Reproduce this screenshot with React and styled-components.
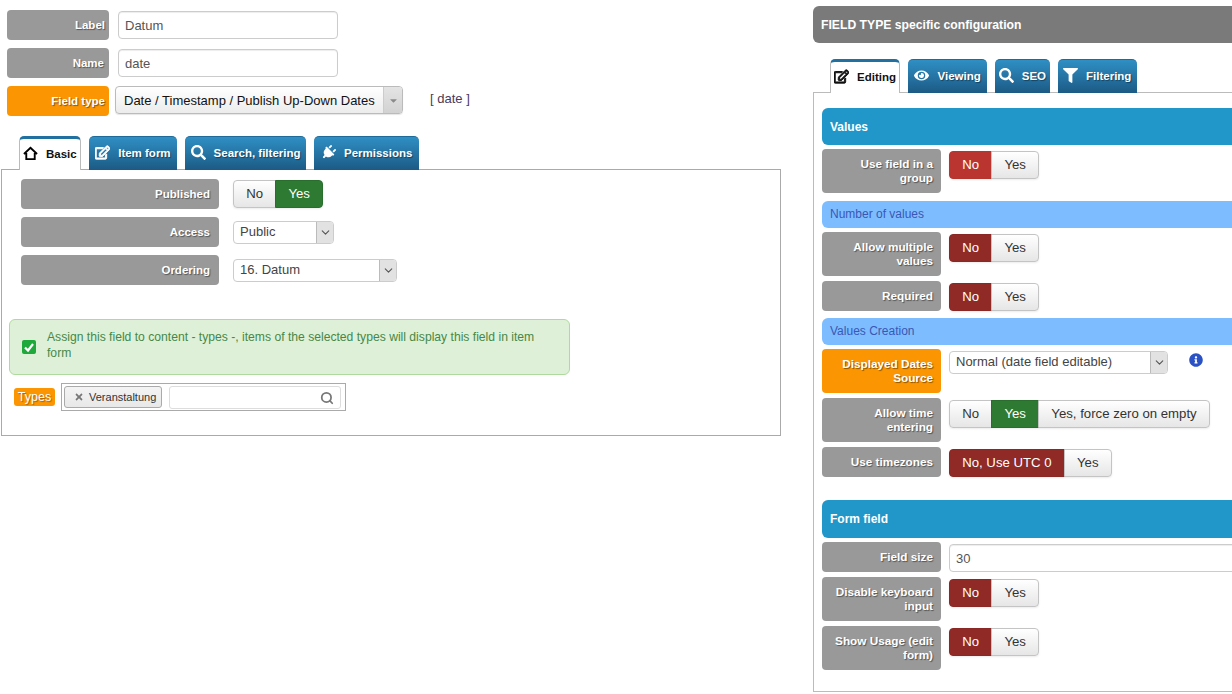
import React from "react";
import styled, { createGlobalStyle, css } from "styled-components";
import { FaRegEdit, FaSearch, FaPlug, FaEye, FaFilter, FaTimes, FaInfoCircle, FaCaretDown } from "react-icons/fa";
import { LuChevronDown, LuSearch } from "react-icons/lu";

const GlobalStyle = createGlobalStyle`
html, body {
  margin: 0;
  height: 694px;
  overflow: hidden;
  background: #fff;
  font-family: "Liberation Sans", Arial, sans-serif;
}
* { box-sizing: border-box; }
`
const Page = styled.div`
display: flex;
width: 1232px;
height: 694px;
overflow: hidden;
padding-left: 1px;
`
const LeftColumn = styled.div`
flex: none;
width: 780px;
margin-right: 32px;
padding-top: 10px;
`
const RightColumn = styled.div`
flex: none;
width: 430px;
padding-top: 6px;
`
const TopForm = styled.div`
padding-left: 6px;
display: flex;
flex-direction: column;
gap: 8px;
`
const Row = styled.div`
display: flex;
align-items: flex-start;
gap: ${(p) => p.$gap || 8}px;
`
const labelTones = {
  gray: "#999999",
  orange: "#fb9602",
}
const FieldLabel = styled.div`
flex: none;
width: ${(p) => p.$width}px;
padding: 8px ${(p) => p.$right || 8}px 8px 8px;
border-radius: 4px;
background: ${(p) => labelTones[p.$tone || "gray"]};
color: #fff;
font-size: ${(p) => p.$size || 11.75}px;
font-weight: bold;
line-height: 14px;
text-align: right;
text-shadow: 1px 1px 1px rgba(0, 0, 0, 0.45);
`
const TextInput = styled.div`
flex: none;
width: ${(p) => p.$width}px;
height: 28px;
margin-top: ${(p) => p.$top || 0}px;
padding: 0 6px;
border: 1px solid #ccc;
border-radius: 4px;
background: #fff;
box-shadow: inset 0 1px 1px rgba(0, 0, 0, 0.075);
color: #555;
font-size: 13px;
line-height: 27px;
`
const TypeSelect = styled.div`
flex: none;
display: flex;
width: 288px;
height: 28px;
border: 1px solid #bbb;
border-radius: 4px;
background: linear-gradient(#ffffff, #ececec);
box-shadow: 0 1px 1px rgba(0, 0, 0, 0.1);
color: #111;
font-size: 13px;
line-height: 27px;
`
const TypeSelectText = styled.div`
flex: 1;
min-width: 0;
padding-left: 8px;
white-space: nowrap;
`
const TypeSelectArrow = styled.div`
flex: none;
display: flex;
align-items: center;
justify-content: center;
width: 19px;
border-left: 1px solid #ccc;
border-radius: 0 3px 3px 0;
background: linear-gradient(#e4e4e4, #d2d2d2);
color: #8a8a8a;
font-size: 11px;
`
const SlugNote = styled.div`
margin-left: 21px;
color: #4a3a5c;
font-size: 13px;
line-height: 26px;
white-space: nowrap;
`
const TabBar = styled.div`
display: flex;
gap: 8px;
height: 34px;
margin-top: ${(p) => p.$top}px;
padding-left: ${(p) => p.$left}px;
position: relative;
z-index: 1;
`
const Tab = styled.div`
display: flex;
align-items: center;
gap: 8px;
height: 34px;
padding: 0 ${(p) => p.$pad || 6}px 2px;
border-radius: 5px 5px 0 0;
font-size: 11.5px;
font-weight: bold;
white-space: nowrap;
${(p) =>
  p.$active
    ? css`
        border: 1px solid #bbb;
        border-top: 3px solid #22709f;
        border-bottom: none;
        background: #fff;
        color: #111;
      `
    : css`
        border-top: 1px solid #1f6a99;
        background: linear-gradient(#2f8fc4, #1c5a85);
        color: #fff;
        text-shadow: 1px 1px 1px rgba(0, 0, 0, 0.4);
      `}
svg { flex: none; font-size: 15px; }
`
const EditIcon = styled(FaRegEdit)`
stroke: currentColor;
stroke-width: 36px;
`
const PlugIcon = styled(FaPlug)`
transform: rotate(45deg);
`
const LeftPanel = styled.div`
margin-top: -1px;
padding: 9px 0 24px;
border: 1px solid #aaa;
`
const PanelRows = styled.div`
display: flex;
flex-direction: column;
gap: 8px;
padding-left: 19px;
`
const Toggle = styled.div`
flex: none;
display: flex;
height: 28px;
margin-top: ${(p) => p.$top}px;
border-radius: 4px;
box-shadow: 0 1px 2px rgba(0, 0, 0, 0.08);
`
const toggleTones = {
  off: css`
    border: 1px solid #c4c4c4;
    background: linear-gradient(#ffffff, #e6e6e6);
    color: #333;
  `,
  red: css`
    border: 1px solid #b5352f;
    background: #bb3530;
    color: #fff;
  `,
  dark: css`
    border: 1px solid #8a2825;
    background: #8f2a27;
    color: #fff;
  `,
  green: css`
    border: 1px solid #2a6e2e;
    background: #2f7a33;
    color: #fff;
  `,
}
const ToggleButton = styled.div`
padding: 0 12.2px;
font-size: 13.2px;
line-height: 26px;
white-space: nowrap;
${(p) => toggleTones[p.$tone || "off"]}
& + & { margin-left: -1px; }
&:first-child { border-radius: 4px 0 0 4px; }
&:last-child { border-radius: 0 4px 4px 0; }
`
const Select = styled.div`
flex: none;
display: flex;
width: ${(p) => p.$width}px;
height: 23px;
margin-top: ${(p) => p.$top}px;
border: 1px solid #ccc;
border-radius: 4px;
background: #fff;
color: #444;
font-size: 13px;
line-height: 20px;
`
const SelectText = styled.div`
flex: 1;
padding-left: 6px;
white-space: nowrap;
`
const SelectArrow = styled.div`
flex: none;
display: flex;
align-items: center;
justify-content: center;
width: 17px;
border-left: 1px solid #bbb;
border-radius: 0 3px 3px 0;
background: #e2e2e2;
color: #555;
svg { font-size: 13px; }
`
const Alert = styled.div`
display: flex;
align-items: center;
gap: 11px;
width: 561px;
height: 56px;
margin: 34px 0 0 7px;
padding: 0 12px;
border: 1px solid #aedb9d;
border-radius: 6px;
background: #dff0d8;
color: #468847;
font-size: 12.15px;
line-height: 16px;
`
const AlertText = styled.span`
max-width: 495px;
padding-bottom: 4px;
`
const CheckMark = styled.svg`
flex: none;
width: 14px;
height: 14px;
`
const TypesRow = styled.div`
display: flex;
align-items: flex-start;
gap: 6px;
margin: 8px 0 0 12px;
`
const TypesBadge = styled.div`
flex: none;
width: 41px;
height: 18px;
margin-top: 5px;
border-radius: 3px;
background: #fb9602;
color: #fff;
font-size: 12.5px;
line-height: 18px;
text-align: center;
text-shadow: 1px 1px 1px rgba(0, 0, 0, 0.35);
`
const TypesBox = styled.div`
display: flex;
gap: 7px;
width: 285px;
height: 28px;
padding: 2px;
border: 1px solid #aaa;
`
const Chip = styled.div`
display: flex;
align-items: center;
gap: 5px;
width: 98px;
height: 22px;
padding-left: 9px;
border: 1px solid #aaa;
border-radius: 3px;
background: linear-gradient(#f4f4f4, #e8e8e8);
color: #333;
font-size: 11px;
white-space: nowrap;
svg { flex: none; color: #777; font-size: 10px; }
`
const SearchField = styled.div`
display: flex;
align-items: center;
justify-content: flex-end;
width: 172px;
height: 23px;
padding-right: 6px;
border: 1px solid #ddd;
border-radius: 3px;
background: #fff;
color: #777;
svg { font-size: 14px; stroke-width: 3; }
`
const ConfigHeader = styled.div`
height: 37px;
padding-left: 8px;
border-radius: 6px 0 0 6px;
background: #7a7a7a;
color: #fff;
font-size: 12.2px;
font-weight: bold;
line-height: 38px;
`
const RightPanel = styled.div`
display: flex;
flex-direction: column;
height: 600px;
margin-top: -1px;
padding: 15px 0 0 8px;
border: 1px solid #bbb;
`
const SectionBar = styled.div`
flex: none;
margin: ${(p) => p.$top || 0}px 0 4px;
height: ${(p) => p.$height}px;
padding-left: 8px;
border-radius: 6px 0 0 6px;
background: #2196c9;
color: #fff;
font-size: 12px;
font-weight: bold;
line-height: ${(p) => p.$height + 1}px;
`
const SubBar = styled(SectionBar)`
background: #7dbdff;
color: #3a57b5;
font-weight: normal;
line-height: ${(p) => p.$height - 1}px;
`
const ConfigRow = styled(Row)`
& + & { margin-top: 5px; }
`
const InfoIcon = styled(FaInfoCircle)`
flex: none;
margin: 4px 0 0 13px;
color: #2a52c4;
font-size: 14px;
`

const HomeIcon = () => (
  <svg width="15" height="15" viewBox="0 0 16 15">
    <path d="M1 8 L8 1.5 L15 8 M3.5 7 V13.5 H12.5 V7" fill="none" stroke="#000" strokeWidth="2" />
  </svg>
)

const YesNo = ({ tone = "dark" }) => (
  <Toggle $top={2}>
    <ToggleButton $tone={tone}>No</ToggleButton>
    <ToggleButton>Yes</ToggleButton>
  </Toggle>
)

function App() {
  return (
    <Page>
      <GlobalStyle />
      <LeftColumn>
        <TopForm>
          <Row $gap={9}>
            <FieldLabel $width={102} $right={4} $size={11.5}>Label</FieldLabel>
            <TextInput $width={220} $top={1}>Datum</TextInput>
          </Row>
          <Row $gap={9}>
            <FieldLabel $width={102} $right={5} $size={11.5}>Name</FieldLabel>
            <TextInput $width={220} $top={1}>date</TextInput>
          </Row>
          <Row $gap={6}>
            <FieldLabel $width={102} $right={4} $size={11.5} $tone="orange">Field type</FieldLabel>
            <TypeSelect>
              <TypeSelectText>Date / Timestamp / Publish Up-Down Dates</TypeSelectText>
              <TypeSelectArrow><FaCaretDown /></TypeSelectArrow>
            </TypeSelect>
            <SlugNote>[ date ]</SlugNote>
          </Row>
        </TopForm>

        <TabBar $top={20} $left={18}>
          <Tab $active $pad={3}><HomeIcon />Basic</Tab>
          <Tab $pad={6.5}><EditIcon />Item form</Tab>
          <Tab $pad={5.5}><FaSearch />Search, filtering</Tab>
          <Tab $pad={7}><PlugIcon />Permissions</Tab>
        </TabBar>
        <LeftPanel>
          <PanelRows>
            <Row $gap={14}>
              <FieldLabel $width={198} $right={9} $size={11.5}>Published</FieldLabel>
              <Toggle $top={1}>
                <ToggleButton>No</ToggleButton>
                <ToggleButton $tone="green">Yes</ToggleButton>
              </Toggle>
            </Row>
            <Row $gap={14}>
              <FieldLabel $width={198} $right={9} $size={11.5}>Access</FieldLabel>
              <Select $width={101} $top={4}>
                <SelectText>Public</SelectText>
                <SelectArrow><LuChevronDown /></SelectArrow>
              </Select>
            </Row>
            <Row $gap={14}>
              <FieldLabel $width={198} $right={9} $size={11.5}>Ordering</FieldLabel>
              <Select $width={164} $top={4}>
                <SelectText>16. Datum</SelectText>
                <SelectArrow><LuChevronDown /></SelectArrow>
              </Select>
            </Row>
          </PanelRows>
          <Alert>
            <CheckMark viewBox="0 0 14 14">
              <rect width="14" height="14" rx="2" fill="#1fa83c" />
              <path d="M3 7.5 L6 10.5 L11 4" fill="none" stroke="#fff" strokeWidth="2.2" />
            </CheckMark>
            <AlertText>Assign this field to content - types -, items of the selected types will display this field in item form</AlertText>
          </Alert>
          <TypesRow>
            <TypesBadge>Types</TypesBadge>
            <TypesBox>
              <Chip><FaTimes />Veranstaltung</Chip>
              <SearchField><LuSearch /></SearchField>
            </TypesBox>
          </TypesRow>
        </LeftPanel>
      </LeftColumn>

      <RightColumn>
        <ConfigHeader>FIELD TYPE specific configuration</ConfigHeader>
        <TabBar $top={16} $left={17}>
          <Tab $active $pad={3}><EditIcon />Editing</Tab>
          <Tab $pad={6.5}><FaEye />Viewing</Tab>
          <Tab $pad={3.5}><FaSearch />SEO</Tab>
          <Tab $pad={5.5}><FaFilter />Filtering</Tab>
        </TabBar>
        <RightPanel>
          <SectionBar $height={37}>Values</SectionBar>
          <ConfigRow>
            <FieldLabel $width={119}>Use field in a group</FieldLabel>
            <YesNo tone="red" />
          </ConfigRow>
          <SubBar $height={27} $top={8}>Number of values</SubBar>
          <ConfigRow>
            <FieldLabel $width={119}>Allow multiple values</FieldLabel>
            <YesNo />
          </ConfigRow>
          <ConfigRow>
            <FieldLabel $width={119}>Required</FieldLabel>
            <YesNo />
          </ConfigRow>
          <SubBar $height={27} $top={7}>Values Creation</SubBar>
          <ConfigRow>
            <FieldLabel $width={119} $tone="orange">Displayed Dates Source</FieldLabel>
            <Select $width={219} $top={2}>
              <SelectText>Normal (date field editable)</SelectText>
              <SelectArrow><LuChevronDown /></SelectArrow>
            </Select>
            <InfoIcon />
          </ConfigRow>
          <ConfigRow>
            <FieldLabel $width={119}>Allow time entering</FieldLabel>
            <Toggle $top={2}>
              <ToggleButton>No</ToggleButton>
              <ToggleButton $tone="green">Yes</ToggleButton>
              <ToggleButton>Yes, force zero on empty</ToggleButton>
            </Toggle>
          </ConfigRow>
          <ConfigRow>
            <FieldLabel $width={119}>Use timezones</FieldLabel>
            <Toggle $top={2}>
              <ToggleButton $tone="dark">No, Use UTC 0</ToggleButton>
              <ToggleButton>Yes</ToggleButton>
            </Toggle>
          </ConfigRow>
          <SectionBar $height={38} $top={23}>Form field</SectionBar>
          <ConfigRow>
            <FieldLabel $width={119}>Field size</FieldLabel>
            <TextInput $width={300} $top={2}>30</TextInput>
          </ConfigRow>
          <ConfigRow>
            <FieldLabel $width={119}>Disable keyboard input</FieldLabel>
            <YesNo />
          </ConfigRow>
          <ConfigRow>
            <FieldLabel $width={119}>Show Usage (edit form)</FieldLabel>
            <YesNo />
          </ConfigRow>
        </RightPanel>
      </RightColumn>
    </Page>
  );
}

export default App;
